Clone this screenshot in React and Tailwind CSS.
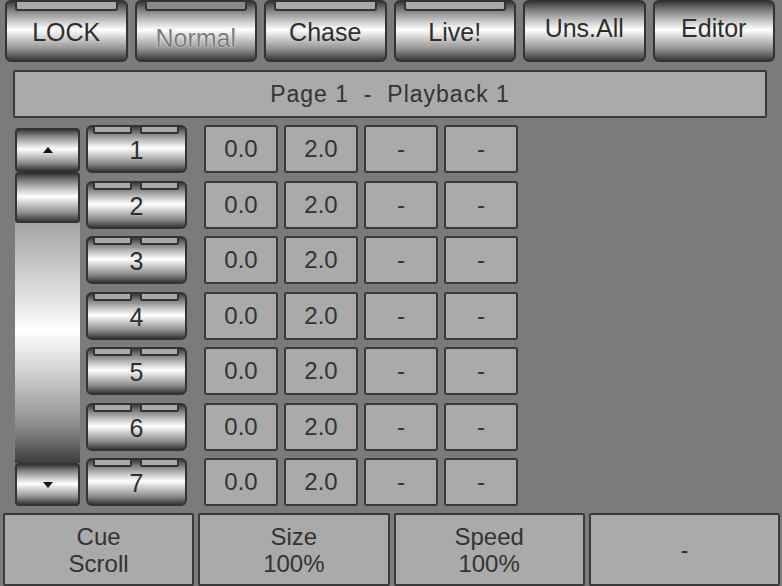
import React from 'react';

const metal =
  'bg-[linear-gradient(to_bottom,#3a3a3a_0%,#7e7e7e_14%,#c4c4c4_32%,#ffffff_48%,#d0d0d0_62%,#8e8e8e_82%,#3a3a3a_100%)]';

const topButtons = [
  { label: 'LOCK', strip: 'bg-[#aaaaaa]', pad: 'pt-[2px]' },
  { label: 'Normal', strip: 'bg-[#8a8a8a]', pad: 'pt-[14px]', dim: true },
  { label: 'Chase', strip: 'bg-[#aaaaaa]', pad: 'pt-[2px]' },
  { label: 'Live!', strip: 'bg-[#aaaaaa]', pad: 'pt-[2px]' },
  { label: 'Uns.All', pad: 'pb-[6px]' },
  { label: 'Editor', pad: 'pb-[6px]' },
];

const rows = [1, 2, 3, 4, 5, 6, 7];

const Cell = ({ children }) => (
  <div className="w-[74px] h-[48px] flex items-center justify-center bg-[#aaaaaa] border-2 border-[#3a3a3a] rounded-[3px] text-[24px] text-[#333]">
    {children}
  </div>
);

const App = () => {
  return (
    <div className="w-[782px] h-[586px] bg-[#7b7b7b] overflow-hidden font-['Liberation_Sans',Arial,sans-serif] text-[#333] leading-none">
      {/* top buttons */}
      <div className="grid grid-cols-6 gap-[7px] pl-[5px] pr-[7px] h-[62px]">
        {topButtons.map((b) => (
          <div
            key={b.label}
            className={`relative h-[62px] rounded-[6px] border-2 border-[#333] ${metal} flex items-center justify-center ${b.pad}`}
          >
            {b.strip && (
              <div className={`absolute top-[-2px] left-[8px] right-[8px] h-[11px] ${b.strip} border-2 border-[#333] rounded-b-[3px]`} />
            )}
            <span
              className={`text-[25px] ${b.dim ? 'text-[#7a7a7a] [text-shadow:0_0_1px_#fff,0_0_1px_#fff]' : 'text-[#2e2e2e]'}`}
            >
              {b.label}
            </span>
          </div>
        ))}
      </div>

      {/* page header */}
      <div className="mt-[8px] ml-[13px] w-[754px] h-[48px] bg-[#aaaaaa] border-2 border-[#3a3a3a] rounded-[2px] flex items-center justify-center text-[23px] tracking-[1px] whitespace-pre">
        Page 1  -  Playback 1
      </div>

      {/* main area */}
      <div className="flex mt-[7px] h-[381px]">
        {/* scroll column */}
        <div className="ml-[15px] mt-[3px] w-[65px] flex flex-col">
          <div className={`h-[44px] rounded-[4px] border-2 border-[#333] ${metal} flex items-center justify-center`}>
            <svg width="10" height="6" viewBox="0 0 10 6">
              <path d="M0 6 L5 0 L10 6 Z" fill="#111" />
            </svg>
          </div>
          <div className={`h-[51px] rounded-[4px] border-2 border-[#333] ${metal}`} />
          <div className="flex-1 bg-[linear-gradient(to_bottom,#a4a4a4_0%,#d6d6d6_25%,#ffffff_45%,#d2d2d2_62%,#8a8a8a_85%,#3c3c3c_100%)]" />
          <div className={`h-[43px] rounded-[4px] border-2 border-[#333] ${metal} flex items-center justify-center`}>
            <svg width="10" height="6" viewBox="0 0 10 6">
              <path d="M0 0 L10 0 L5 6 Z" fill="#111" />
            </svg>
          </div>
        </div>

        {/* rows */}
        <div className="ml-[6px] flex flex-col gap-[7.5px]">
          {rows.map((n) => (
            <div key={n} className="flex items-center h-[48px]">
              <div className={`relative w-[101px] h-[48px] rounded-[6px] border-2 border-[#333] ${metal} flex items-center justify-center pt-[3px]`}>
                <div className="absolute top-[-2px] left-[5px] w-[39px] h-[9px] bg-[#aaaaaa] border-2 border-[#333] rounded-b-[2px]" />
                <div className="absolute top-[-2px] left-[52px] w-[39px] h-[9px] bg-[#aaaaaa] border-2 border-[#333] rounded-b-[2px]" />
                <span className="text-[25px] text-[#2e2e2e]">{n}</span>
              </div>
              <div className="ml-[17px] flex gap-[6px]">
                <Cell>0.0</Cell>
                <Cell>2.0</Cell>
                <Cell>-</Cell>
                <Cell>-</Cell>
              </div>
            </div>
          ))}
        </div>
      </div>

      {/* bottom row */}
      <div className="grid grid-cols-4 gap-[4px] mt-[7px] ml-[3px] w-[777px] h-[73px]">
        {[
          ['Cue', 'Scroll'],
          ['Size', '100%'],
          ['Speed', '100%'],
          ['-'],
        ].map((lines, i) => (
          <div
            key={i}
            className="bg-[#aaaaaa] border-2 border-[#3a3a3a] rounded-[2px] flex flex-col items-center justify-center text-[24px] leading-[27px]"
          >
            {lines.map((l) => (
              <span key={l}>{l}</span>
            ))}
          </div>
        ))}
      </div>
    </div>
  );
};

export default App;
